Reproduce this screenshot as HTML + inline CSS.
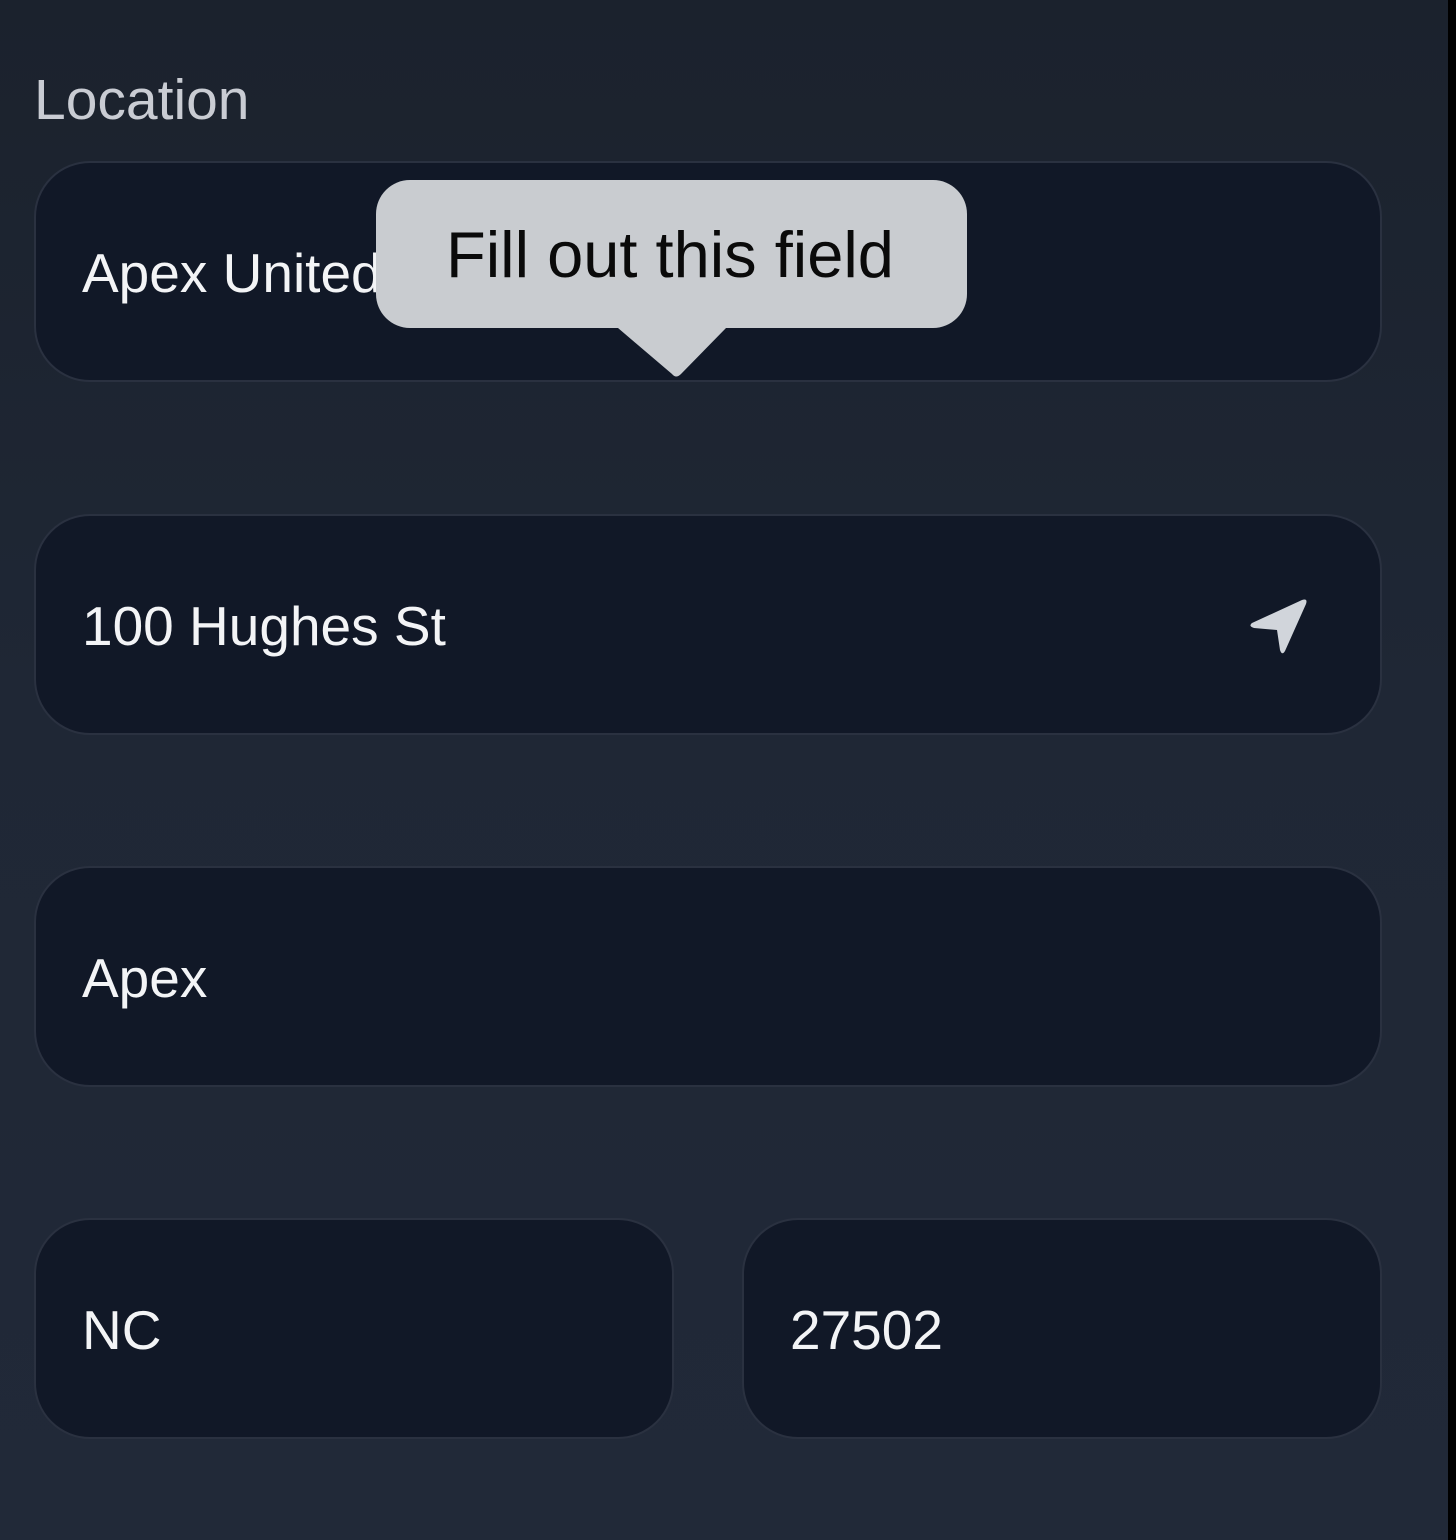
<!DOCTYPE html>
<html><head><style>
html,body{margin:0;padding:0}
body{width:1456px;height:1540px;position:relative;overflow:hidden;background:linear-gradient(180deg,#1b222d 0%,#1f2735 45%,#212938 100%);font-family:"Liberation Sans",sans-serif}
.strip{position:absolute;right:0;top:0;width:8px;height:1540px;background:#000}
.label{position:absolute;left:34px;top:70px;font-size:57px;color:#c9ccd3;line-height:60px}
.f{position:absolute;background:#111827;border:2px solid #2a3140;border-radius:56px;box-sizing:border-box;height:221px}
.f span{position:absolute;left:46px;top:80px;font-size:55px;line-height:60px;color:#f3f4f6}
.tip{position:absolute;left:376px;top:180px;width:591px;height:148px;background:#c9ccd0;border-radius:34px}
.tip span{position:absolute;left:70px;top:42px;font-size:65px;line-height:66px;color:#0a0a0a}
</style></head><body>
<div class="strip"></div>
<div class="label">Location</div>
<div class="f" style="left:34px;top:161px;width:1348px;"><span>Apex United</span></div>
<div class="f" style="left:34px;top:514px;width:1348px;"><span>100 Hughes St</span>
<svg style="position:absolute;left:1200px;top:70px" width="90" height="80" viewBox="1234 584 90 80"><path d="M1250 621 L1300 598 Q1306 596 1304 602 L1283 649 Q1280 654 1278 648 L1275 628 L1252 626 Q1246 624 1250 621Z" fill="#d1d5db"/></svg></div>
<div class="f" style="left:34px;top:866px;width:1348px;"><span>Apex</span></div>
<div class="f" style="left:34px;top:1218px;width:640px;"><span>NC</span></div>
<div class="f" style="left:742px;top:1218px;width:640px;"><span>27502</span></div>
<div class="tip"><span>Fill out this field</span></div>
<svg style="position:absolute;left:600px;top:320px" width="150" height="70"><path d="M18 8 L126 8 L81 54 Q76 59 72 54 Z" fill="#c9ccd0"/></svg>
</body></html>
